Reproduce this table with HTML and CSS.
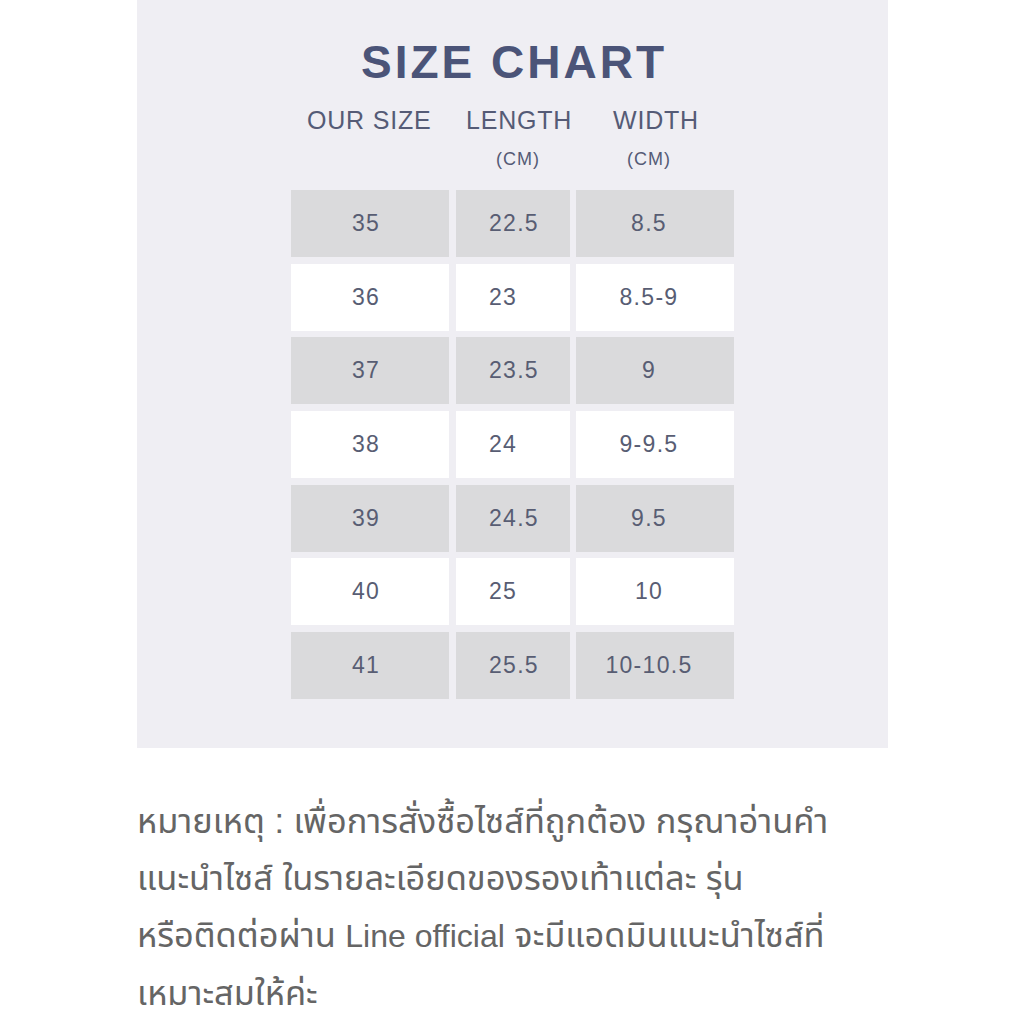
FILE: index.html
```html
<!DOCTYPE html>
<html lang="th">
<head>
<meta charset="utf-8">
<link rel="stylesheet" href="styles.css">
</head>
<body>
<div class="page">
  <section class="panel">
    <h1 class="title">SIZE CHART</h1>
    <div class="heads">
      <div class="head h1c">OUR SIZE</div>
      <div class="head h2c">LENGTH<span class="unit">(CM)</span></div>
      <div class="head h3c">WIDTH<span class="unit">(CM)</span></div>
    </div>
    <div class="table">
      <div class="row grey"><div class="cell c1">35</div><div class="cell c2">22.5</div><div class="cell c3">8.5</div></div>
      <div class="row white"><div class="cell c1">36</div><div class="cell c2">23</div><div class="cell c3">8.5-9</div></div>
      <div class="row grey"><div class="cell c1">37</div><div class="cell c2">23.5</div><div class="cell c3">9</div></div>
      <div class="row white"><div class="cell c1">38</div><div class="cell c2">24</div><div class="cell c3">9-9.5</div></div>
      <div class="row grey"><div class="cell c1">39</div><div class="cell c2">24.5</div><div class="cell c3">9.5</div></div>
      <div class="row white"><div class="cell c1">40</div><div class="cell c2">25</div><div class="cell c3">10</div></div>
      <div class="row grey"><div class="cell c1">41</div><div class="cell c2">25.5</div><div class="cell c3">10-10.5</div></div>
    </div>
  </section>
  <p class="note">หมายเหตุ : เพื่อการสั่งซื้อไซส์ที่ถูกต้อง กรุณาอ่านคำ<br>แนะนำไซส์ ในรายละเอียดของรองเท้าแต่ละ รุ่น<br>หรือติดต่อผ่าน <span class="en">Line official</span> จะมีแอดมินแนะนำไซส์ที่<br>เหมาะสมให้ค่ะ</p>
</div>
</body>
</html>
```
FILE: styles.css
```css
* { box-sizing: border-box; }
html, body { margin: 0; padding: 0; background: #ffffff; }
body { width: 1024px; height: 1024px; overflow: hidden; font-family: "Liberation Sans", Arial, sans-serif; }
.page { padding-left: 137px; }
.panel {
  width: 751px;
  height: 748px;
  background: #efeef3;
  padding-top: 37px;
}
.title {
  margin: 0;
  font-size: 46px;
  font-weight: bold;
  letter-spacing: 3px;
  color: #4b5478;
  text-align: center;
  padding-left: 3px;
  line-height: 50px;
}
.heads {
  display: flex;
  margin-top: 18px;
  height: 85px;
  color: #555b76;
  font-size: 25px;
  letter-spacing: 0.8px;
  line-height: 30px;
}
.head { display: flex; flex-direction: column; }
.h1c { margin-left: 170px; width: 159px; }
.h2c { width: 147px; }
.unit { font-size: 18px; letter-spacing: 1px; margin-top: 14px; line-height: 20px; }
.h2c .unit { padding-left: 30px; }
.h3c .unit { padding-left: 14px; }
.table {
  margin-left: 154px;
  display: flex;
  flex-direction: column;
  gap: 6.67px;
}
.row { display: flex; height: 67px; }
.cell {
  height: 67px;
  display: flex;
  align-items: center;
  font-size: 23px;
  letter-spacing: 1.3px;
  color: #585d73;
}
.row.grey .cell { background: #dadadc; }
.row.white .cell { background: #ffffff; }
.c1 { width: 158px; justify-content: center; padding-right: 8px; }
.c2 { width: 114px; margin-left: 7px; padding-left: 33px; }
.c3 { width: 158px; margin-left: 6px; justify-content: center; padding-right: 12px; }
.note {
  margin: 45px 0 0 0;
  font-family: "Liberation Sans", "Noto Sans Thai", "Noto Sans", sans-serif;
  font-size: 34.4px;
  line-height: 57px;
  color: #656565;
}
.note .en { font-size: 32px; }
```
